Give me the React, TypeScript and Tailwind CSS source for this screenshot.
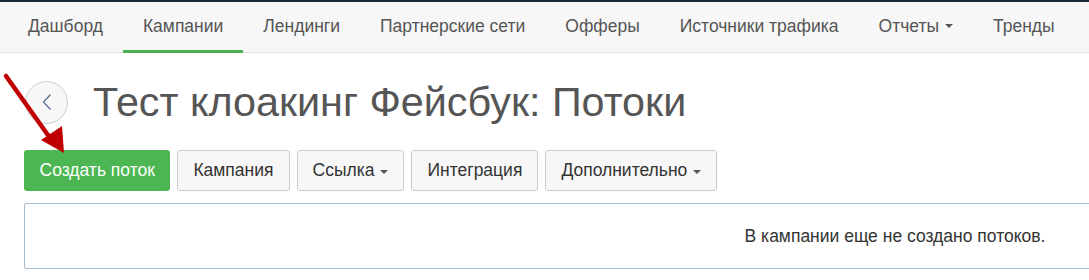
import React from "react";

const navItems = [
  "Дашборд",
  "Кампании",
  "Лендинги",
  "Партнерские сети",
  "Офферы",
  "Источники трафика",
  "Отчеты",
  "Тренды",
];

function Caret() {
  return (
    <span className="ml-[6px] inline-block h-0 w-0 border-l-[4.5px] border-r-[4.5px] border-t-[4.5px] border-l-transparent border-r-transparent border-t-[#555] align-middle" />
  );
}

const btn =
  "h-[41px] rounded-[3px] border border-[#ccc] bg-[#f7f7f7] px-[15px] text-[17.5px] text-[#333]";

export default function App() {
  return (
    <div
      className="relative h-[280px] w-[1089px] overflow-hidden bg-white"
      style={{ fontFamily: '"Liberation Sans", Arial, sans-serif' }}
    >
      <div className="h-[2px] bg-[#1c2b38]" />
      <nav className="flex h-[51px] border-b border-[#e3e3e3] bg-[#f7f7f7] pl-[8px]">
        {navItems.map((item) => (
          <div
            key={item}
            className={
              "flex items-center px-[20px] pb-[2px] text-[17.5px] text-[#555] " +
              (item === "Кампании" ? "border-b-[3px] border-[#4cb050] pt-[3px] -mb-px" : "")
            }
          >
            {item}
            {item === "Отчеты" && <Caret />}
          </div>
        ))}
      </nav>

      <div className="flex items-center pl-[25px] pt-[24px]">
        <div className="flex h-[43px] w-[43px] items-center justify-center rounded-full border border-[#ccc] bg-[#f7f7f7]">
          <svg width="10" height="16" viewBox="0 0 10 16" fill="none">
            <path d="M8.5 0.5 L1.5 8 L8.5 15.5" stroke="#5a7095" strokeWidth="1.3" />
          </svg>
        </div>
        <h1 className="ml-[25px] text-[41.3px] leading-[50px] text-[#555]">
          Тест клоакинг Фейсбук: Потоки
        </h1>
      </div>

      <div className="mt-[23px] flex gap-[7px] pl-[24px]">
        <button className="h-[41px] rounded-[3px] bg-[#4cb752] px-[15.5px] text-[17.5px] text-white">
          Создать поток
        </button>
        <button className={btn}>Кампания</button>
        <button className={btn}>
          Ссылка
          <Caret />
        </button>
        <button className={btn}>Интеграция</button>
        <button className={btn}>
          Дополнительно
          <Caret />
        </button>
      </div>

      <div className="ml-[24px] mt-[12px] flex h-[66px] w-[1742px] items-center justify-center rounded-[2px] border border-[#a9bccb] text-[17.5px] text-[#333]">
        В кампании еще не создано потоков.
      </div>

      <svg
        className="absolute left-0 top-[70px]"
        width="80"
        height="90"
        viewBox="0 0 80 90"
      >
        <line x1="6" y1="6" x2="50" y2="68" stroke="#c00000" strokeWidth="4.5" strokeLinecap="round" />
        <polygon points="64,83 41,70 62,56" fill="#c00000" />
      </svg>
    </div>
  );
}
